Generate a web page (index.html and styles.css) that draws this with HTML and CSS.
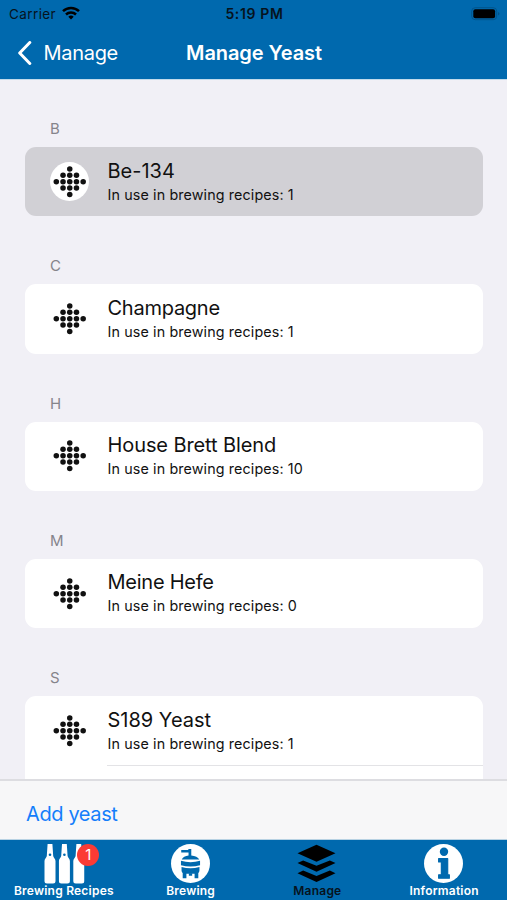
FILE: index.html
```html
<!DOCTYPE html>
<html lang="en">
<head>
<meta charset="utf-8">
<title>Manage Yeast</title>
<link rel="stylesheet" href="styles.css">
</head>
<body>
<svg class="defs" aria-hidden="true">
  <symbol id="yeast" viewBox="0 0 40 40">
    <circle cx="20" cy="7" r="2.8"/>
    <circle cx="13.2" cy="13.4" r="2.8"/><circle cx="20" cy="13.4" r="2.8"/><circle cx="26.8" cy="13.4" r="2.8"/>
    <circle cx="6.4" cy="20" r="2.8"/><circle cx="13.2" cy="20" r="2.8"/><circle cx="20" cy="20" r="2.8"/><circle cx="26.8" cy="20" r="2.8"/><circle cx="33.6" cy="20" r="2.8"/>
    <circle cx="13.2" cy="26.4" r="2.8"/><circle cx="20" cy="26.4" r="2.8"/><circle cx="26.8" cy="26.4" r="2.8"/>
    <circle cx="20" cy="32.8" r="2.8"/>
  </symbol>
  <symbol id="bottle" viewBox="0 0 12 40">
    <path d="M3.600 0h4.800l.8 12c.1 1.500 2.300 2.500 2.300 5v20q0 2.500-2.500 2.500H3Q.5 39.500.5 37V17c0-2.500 2.200-3.500 2.300-5z" fill="#fff"/>
    <circle cx="6" cy="10.800" r="1.300" fill="#0069ae"/>
  </symbol>
</svg>
<div class="app">
  <header class="top">
    <div class="status">
      <span class="carrier"><span class="carrier-name">Carrier</span>
        <svg class="wifi" viewBox="0 0 18 14"><g fill="none" stroke="#000" stroke-width="2.500"><path d="M1 5.200a11.500 11.500 0 0 1 16 0"/><path d="M4 8.500a7.200 7.200 0 0 1 10 0"/></g><path d="M9 13.500 6.300 10.800a3.900 3.900 0 0 1 5.400 0z"/></svg>
      </span>
      <span class="time">5:19 PM</span>
      <svg class="battery" viewBox="0 0 29 14"><rect x=".7" y=".7" width="25" height="12" rx="3.500" fill="none" stroke="#00548c" stroke-width="1"/><rect x="2.300" y="2.300" width="21.800" height="8.900" rx="2"/><path d="M27 5v3.600q1.500-.5 1.500-1.800T27 5z" fill="#00548c"/></svg>
    </div>
    <nav class="nav">
      <a class="back"><svg class="chevron" viewBox="0 0 14 24"><path d="M12.300 1.500 2.200 12l10.100 10.500" fill="none" stroke="#fff" stroke-width="3" stroke-linecap="round" stroke-linejoin="round"/></svg><span class="back-label">Manage</span></a>
      <h1 class="title">Manage Yeast</h1>
    </nav>
  </header>
  <main class="list">
    <section class="group"><h2 class="letter">B</h2>
      <div class="card selected"><svg class="yeast"><use href="#yeast"/></svg><div class="text"><p class="name wide">Be-134</p><p class="use">In use in brewing recipes: 1</p></div></div></section>
    <section class="group"><h2 class="letter">C</h2>
      <div class="card"><svg class="yeast"><use href="#yeast"/></svg><div class="text"><p class="name">Champagne</p><p class="use">In use in brewing recipes: 1</p></div></div></section>
    <section class="group"><h2 class="letter">H</h2>
      <div class="card"><svg class="yeast"><use href="#yeast"/></svg><div class="text"><p class="name mid">House Brett Blend</p><p class="use">In use in brewing recipes: 10</p></div></div></section>
    <section class="group"><h2 class="letter">M</h2>
      <div class="card"><svg class="yeast"><use href="#yeast"/></svg><div class="text"><p class="name">Meine Hefe</p><p class="use">In use in brewing recipes: 0</p></div></div></section>
    <section class="group"><h2 class="letter">S</h2>
      <div class="card open"><svg class="yeast"><use href="#yeast"/></svg><div class="text"><p class="name wide">S189 Yeast</p><p class="use">In use in brewing recipes: 1</p></div></div>
      <div class="next"></div></section>
  </main>
  <div class="toolbar"><a class="add">Add yeast</a></div>
  <footer class="tabs">
    <a class="tab"><span class="icon"><svg class="bottles" viewBox="0 0 41 40"><use href="#bottle" width="12" height="40"/><use href="#bottle" x="14.400" width="12" height="40"/><use href="#bottle" x="28.800" width="12" height="40"/></svg><span class="badge">1</span></span><span class="label">Brewing Recipes</span></a>
    <a class="tab"><span class="icon"><svg viewBox="0 0 40 40"><circle cx="20" cy="20" r="20" fill="#fff"/><g fill="#0069ae"><path d="M10.500 6.200h7.300V5h3v6.700c4 .3 7 1.600 8.200 4.300H11c1-2.700 3.700-4 7-4.300V8.600h-7.500z"/><path d="M10.200 17.200q9.800 2.800 19.600 0v4.500q-9.800 2.800-19.600 0z"/><path d="M10.800 23.600q9.200 2.400 18.400 0V27q0 3-3 3.400H13.800q-3-.4-3-3.400z"/><path d="M12 29h3.800v6H12zM24.200 29H28v6h-3.800zM18.300 30h3.400v2.500h-3.400z"/></g></svg></span><span class="label">Brewing</span></a>
    <a class="tab active"><span class="icon"><svg viewBox="0 0 40 40"><path d="M20 .8 39.500 9.500 20 18.200.5 9.500zM.5 19.500l5.800-2.700L20 22.300l13.700-5.500 5.800 2.700L20 28.500zM.5 30l5.800-2.700L20 32.800l13.700-5.500 5.800 2.700L20 39z"/></svg></span><span class="label">Manage</span></a>
    <a class="tab"><span class="icon"><svg viewBox="0 0 40 40"><circle cx="20" cy="20" r="20" fill="#fff"/><g fill="#0069ae"><circle cx="20.500" cy="8" r="4.300"/><path d="M15 15h9.300v16.500H26V35H15v-3.500h2.800v-13H15z" stroke="#0069ae" stroke-width="1.200" stroke-linejoin="round"/></g></svg></span><span class="label">Information</span></a>
  </footer>
</div>
</body>
</html>
```
FILE: styles.css
```css
* { box-sizing: border-box; margin: 0; padding: 0; }
body { font-family: Inter, sans-serif; background: #f1f0f6; color: #111; }
svg { display: block; flex: none; }
.defs { position: absolute; width: 0; height: 0; }
.app { width: 507px; height: 900px; display: flex; flex-direction: column; overflow: hidden; }
.top { height: 79px; flex: none; background: #0069ae; box-shadow: 0 1px 0 #c1dbeb; z-index: 1; }
.status { height: 27px; display: grid; grid-template-columns: 1fr auto 1fr; align-items: center; padding: 0 7px 0 9px; color: #06131d; font-size: 13.500px; }
.carrier { display: flex; align-items: center; gap: 6px; }
.carrier-name { letter-spacing: .4px; }
.wifi { width: 18px; height: 14px; margin-top: -2px; }
.time { font-weight: 600; font-size: 14px; letter-spacing: .65px; }
.battery { width: 29px; height: 14px; justify-self: end; }
.nav { height: 52px; display: grid; grid-template-columns: 1fr auto 1fr; align-items: center; color: #fff; padding: 0 16px 0 17px; }
.back { display: flex; align-items: center; gap: 11.500px; font-size: 20px; letter-spacing: -.3px; }
.chevron { width: 15px; height: 24px; }
.title { font-size: 20px; font-weight: 600; line-height: 24px; letter-spacing: -.08px; }
.list { flex: 1; min-height: 0; overflow: hidden; padding: 0 24.500px 0 25px; }
.group { height: 137.250px; }
.letter { height: 68px; padding: 40px 0 0 25px; font-size: 15px; line-height: 20px; font-weight: 400; color: #85848b; }
.card { height: 69.250px; border-radius: 11px; background: #fff; display: flex; align-items: center; padding-left: 24.500px; gap: 18.500px; }
.selected { background: #d1d0d5; }
.open { border-radius: 11px 11px 0 0; }
.next { height: 50px; background: #fff; }
.next::before { content: ""; display: block; margin-left: 82px; height: 1px; background: #e3e3e6; }
.yeast { width: 39.500px; height: 39.500px; border-radius: 50%; background: #fff; fill: #111; }
.text { white-space: nowrap; }
.name { font-size: 20px; line-height: 26px; letter-spacing: -.25px; }
.mid { letter-spacing: -.1px; }
.wide { letter-spacing: 0; }
.use { font-size: 14.300px; line-height: 22px; letter-spacing: .13px; }
.toolbar { height: 61px; flex: none; padding: 22px 26px 0; background: #f7f7f8; border-top: 2px solid #dddde1; border-bottom: 1px solid #b8d2e3; }
.add { display: block; color: #147efb; font-size: 20px; line-height: 22px; letter-spacing: -.38px; }
.tabs { height: 60px; flex: none; display: grid; grid-template-columns: repeat(4, 1fr); background: #0069ae; color: #fff; }
.tab { display: flex; flex-direction: column; align-items: center; padding-top: 4px; }
.icon { position: relative; display: block; height: 40px; }
.icon svg { width: 39px; height: 39px; }
.icon .bottles { width: 41px; height: 40px; margin-left: 2px; }
.badge { position: absolute; left: 35.500px; top: 0; width: 22px; height: 22px; border-radius: 50%; background: #fb3b35; color: #fff; text-align: center; font-size: 15px; line-height: 22px; }
.label { font-size: 12px; line-height: 14px; font-weight: 600; letter-spacing: .22px; padding-left: 1px; white-space: nowrap; }
.active { color: #06131d; }
```
